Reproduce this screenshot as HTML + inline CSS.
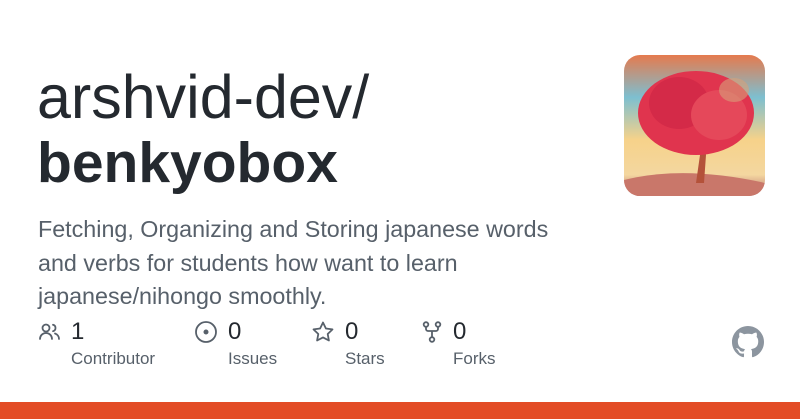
<!DOCTYPE html>
<html><head><meta charset="utf-8"><style>
body{margin:0;width:800px;height:419px;background:#fff;position:relative;overflow:hidden;font-family:"Liberation Sans",sans-serif;color:#24292f}
.t{position:absolute;left:37px;line-height:1}
.d{position:absolute;left:38px;top:213px;width:540px;font-size:23.3px;line-height:33.5px;color:#57606a}
.n{position:absolute;top:318px;font-size:24px;color:#24292f}
.l{position:absolute;top:349px;font-size:17px;color:#57606a}
svg.i{position:absolute;top:320px}
</style></head><body>
<div class="t" style="top:67px;font-size:61px;color:#24292f">arshvid-dev/</div>
<div class="t" style="top:135px;font-size:57px;font-weight:bold">benkyobox</div>
<div class="d">Fetching, Organizing and Storing japanese words and verbs for students how want to learn japanese/nihongo smoothly.</div>
<svg style="position:absolute;left:624px;top:55px" width="141" height="141"><defs>
<linearGradient id="s" x1="0" y1="0" x2="0" y2="1"><stop offset="0" stop-color="#e57a4e"/><stop offset=".3" stop-color="#7dbfd0"/><stop offset=".6" stop-color="#f6d28a"/><stop offset=".85" stop-color="#f4d7a0"/><stop offset="1" stop-color="#b36a6a"/></linearGradient>
<clipPath id="c"><rect width="141" height="141" rx="16"/></clipPath></defs>
<g clip-path="url(#c)"><rect width="141" height="141" fill="url(#s)"/>
<path d="M0 125 Q60 110 141 128 V141 H0Z" fill="#c9776a"/>
<path d="M72 128 L76 100 L70 80 L80 82 L82 100 L80 128Z" fill="#b4523a"/>
<ellipse cx="72" cy="58" rx="58" ry="42" fill="#e0344e"/>
<ellipse cx="55" cy="48" rx="30" ry="26" fill="#d42a48"/>
<ellipse cx="95" cy="60" rx="28" ry="25" fill="#e5485a"/>
<ellipse cx="110" cy="35" rx="15" ry="12" fill="#d7a07a" opacity=".6"/>
</g></svg>
<svg class="i" style="left:38px" width="24" height="24" viewBox="0 0 24 24" fill="none" stroke="#57606a" stroke-width="1.8" stroke-linecap="round"><circle cx="8" cy="8" r="3.5"/><path d="M2 19c0-3.5 2.7-6 6-6s6 2.5 6 6"/><path d="M15 4.8a3.3 3.3 0 0 1 0 6.4M17 13.5c2.5.8 4 3 4 5.5"/></svg>
<div class="n" style="left:71px">1</div><div class="l" style="left:71px">Contributor</div>
<svg class="i" style="left:194px" width="24" height="24" viewBox="0 0 24 24" fill="none" stroke="#57606a" stroke-width="1.8"><circle cx="12" cy="12" r="10"/><circle cx="12" cy="12" r="1.6" fill="#57606a"/></svg>
<div class="n" style="left:228px">0</div><div class="l" style="left:228px">Issues</div>
<svg class="i" style="left:311px" width="24" height="24" viewBox="0 0 24 24" fill="none" stroke="#57606a" stroke-width="1.8" stroke-linejoin="round"><path d="M12 2.5l2.9 6 6.6.9-4.8 4.6 1.2 6.5L12 17.4l-5.9 3.1 1.2-6.5-4.8-4.6 6.6-.9z"/></svg>
<div class="n" style="left:345px">0</div><div class="l" style="left:345px">Stars</div>
<svg class="i" style="left:420px" width="24" height="24" viewBox="0 0 24 24" fill="none" stroke="#57606a" stroke-width="1.8"><circle cx="6" cy="4.5" r="2.3"/><circle cx="18" cy="4.5" r="2.3"/><circle cx="12" cy="19.5" r="2.3"/><path d="M6 7v2a2 2 0 0 0 2 2h8a2 2 0 0 0 2-2V7M12 11v6"/></svg>
<div class="n" style="left:453px">0</div><div class="l" style="left:453px">Forks</div>
<svg style="position:absolute;left:732px;top:326px" width="32" height="32" viewBox="0 0 16 16"><path fill="#8c959f" d="M8 0C3.58 0 0 3.58 0 8c0 3.54 2.29 6.53 5.47 7.59.4.07.55-.17.55-.38 0-.19-.01-.82-.01-1.49-2.01.37-2.53-.49-2.690-.94-.09-.23-.48-.94-.82-1.13-.28-.15-.68-.52-.01-.53.63-.01 1.08.58 1.23.82.72 1.21 1.87.87 2.33.66.07-.52.28-.87.51-1.07-1.78-.2-3.64-.89-3.64-3.95 0-.87.31-1.59.82-2.15-.08-.2-.36-1.02.08-2.12 0 0 .67-.21 2.2.82.64-.18 1.32-.27 2-.27.68 0 1.36.09 2 .27 1.53-1.04 2.2-.82 2.2-.82.44 1.1.16 1.92.08 2.12.51.56.82 1.27.82 2.15 0 3.07-1.87 3.75-3.65 3.95.29.25.54.73.54 1.48 0 1.07-.01 1.93-.01 2.2 0 .21.15.46.55.38A8.013 8.013 0 0016 8c0-4.42-3.58-8-8-8z"/></svg>
<div style="position:absolute;left:0;top:402px;width:800px;height:17px;background:#e34c26"></div>
</body></html>
